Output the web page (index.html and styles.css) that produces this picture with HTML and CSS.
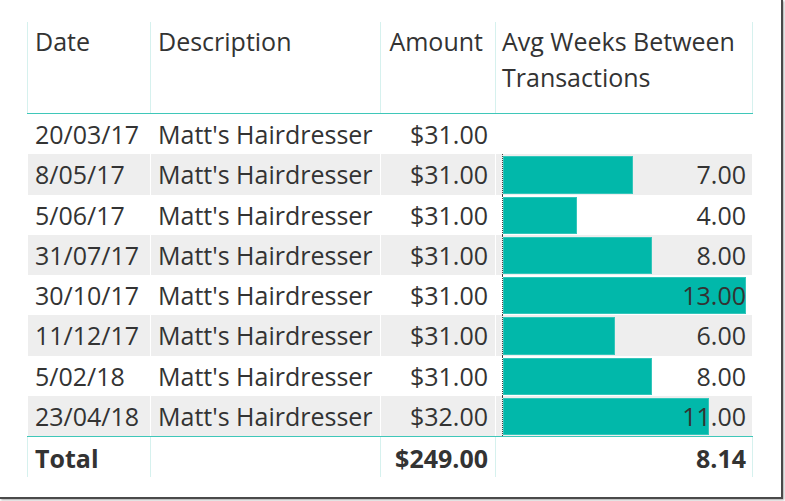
FILE: index.html
```html
<!DOCTYPE html>
<html>
<head>
<meta charset="utf-8">
<link rel="stylesheet" href="styles.css">
</head>
<body>
<div class="frame">
  <div class="table">
    <div class="row head">
      <div class="cell">Date</div>
      <div class="cell">Description</div>
      <div class="cell num">Amount</div>
      <div class="cell">Avg Weeks Between Transactions</div>
    </div>
    <div class="body">
      <div class="row">
        <div class="cell">20/03/17</div>
        <div class="cell">Matt's Hairdresser</div>
        <div class="cell num">$31.00</div>
        <div class="cell barcell"></div>
      </div>
      <div class="row alt">
        <div class="cell">8/05/17</div>
        <div class="cell">Matt's Hairdresser</div>
        <div class="cell num">$31.00</div>
        <div class="cell barcell"><div class="track"><div class="bar" style="width:130px"></div><div class="val">7.00</div></div></div>
      </div>
      <div class="row">
        <div class="cell">5/06/17</div>
        <div class="cell">Matt's Hairdresser</div>
        <div class="cell num">$31.00</div>
        <div class="cell barcell"><div class="track"><div class="bar" style="width:74px"></div><div class="val">4.00</div></div></div>
      </div>
      <div class="row alt">
        <div class="cell">31/07/17</div>
        <div class="cell">Matt's Hairdresser</div>
        <div class="cell num">$31.00</div>
        <div class="cell barcell"><div class="track"><div class="bar" style="width:149px"></div><div class="val">8.00</div></div></div>
      </div>
      <div class="row">
        <div class="cell">30/10/17</div>
        <div class="cell">Matt's Hairdresser</div>
        <div class="cell num">$31.00</div>
        <div class="cell barcell"><div class="track"><div class="bar" style="width:243px"></div><div class="val">13.00</div></div></div>
      </div>
      <div class="row alt">
        <div class="cell">11/12/17</div>
        <div class="cell">Matt's Hairdresser</div>
        <div class="cell num">$31.00</div>
        <div class="cell barcell"><div class="track"><div class="bar" style="width:112px"></div><div class="val">6.00</div></div></div>
      </div>
      <div class="row">
        <div class="cell">5/02/18</div>
        <div class="cell">Matt's Hairdresser</div>
        <div class="cell num">$31.00</div>
        <div class="cell barcell"><div class="track"><div class="bar" style="width:149px"></div><div class="val">8.00</div></div></div>
      </div>
      <div class="row alt">
        <div class="cell">23/04/18</div>
        <div class="cell">Matt's Hairdresser</div>
        <div class="cell num">$32.00</div>
        <div class="cell barcell"><div class="track"><div class="bar" style="width:206px"></div><div class="val">11.00</div></div></div>
      </div>
    </div>
    <div class="row total">
      <div class="cell">Total</div>
      <div class="cell"></div>
      <div class="cell num">$249.00</div>
      <div class="cell num">8.14</div>
    </div>
  </div>
</div>
</body>
</html>
```
FILE: styles.css
```css
html, body {
  margin: 0;
  padding: 0;
  background: #ffffff;
}
body {
  width: 785px;
  height: 501px;
  overflow: hidden;
}
.frame {
  width: 783px;
  height: 499px;
  background: #ffffff;
  border-right: 2px solid #4a4a4a;
  border-bottom: 2px solid #4a4a4a;
  box-shadow: 1px 1px 2px rgba(0,0,0,0.35);
  padding: 22px 0 0 27px;
  box-sizing: border-box;
  font-family: "Open Sans", "Noto Sans", sans-serif;
  font-size: 25px;
  color: #333333;
}
.table {
  width: 726px;
}
.row {
  display: grid;
  grid-template-columns: 122px 229px 114px 256px;
  column-gap: 1px;
  padding: 0 1px;
  background: #ffffff;
}
.cell {
  background: #ffffff;
  padding: 0 7px;
  white-space: nowrap;
  display: flex;
  align-items: center;
  min-width: 0;
}
.num {
  justify-content: flex-end;
}
.head {
  background: #d6f1ee;
  height: 91px;
  border-bottom: 1px solid #3fc7b9;
}
.head .cell {
  align-items: flex-start;
  white-space: normal;
  line-height: 36px;
  padding-top: 1px;
}
.head .cell.num {
  padding-right: 12px;
}
.head .cell:last-child {
  padding-left: 6px;
}
.body .row {
  height: 40.25px;
}
.body .cell {
  box-sizing: border-box;
}
.body .row.alt .cell {
  background: #eeeeee;
}
.barcell {
  padding: 0 6px 0 6px;
  align-items: stretch;
}
.track {
  flex: 1;
  display: grid;
  border-left: 1px dotted #444;
}
.bar {
  grid-area: 1 / 1;
  background: #01b8aa;
  margin: 2px 0 1px;
  box-shadow: inset 0 0 0 1px #33c6bb;
}
.val {
  grid-area: 1 / 1;
  justify-self: end;
  align-self: center;
}
.total {
  background: #d6f1ee;
  height: 40px;
  border-top: 1px solid #3fc7b9;
  font-weight: 700;
}
.total .cell {
  padding-top: 2px;
}
.total .cell:last-child {
  padding-right: 6px;
}
```
